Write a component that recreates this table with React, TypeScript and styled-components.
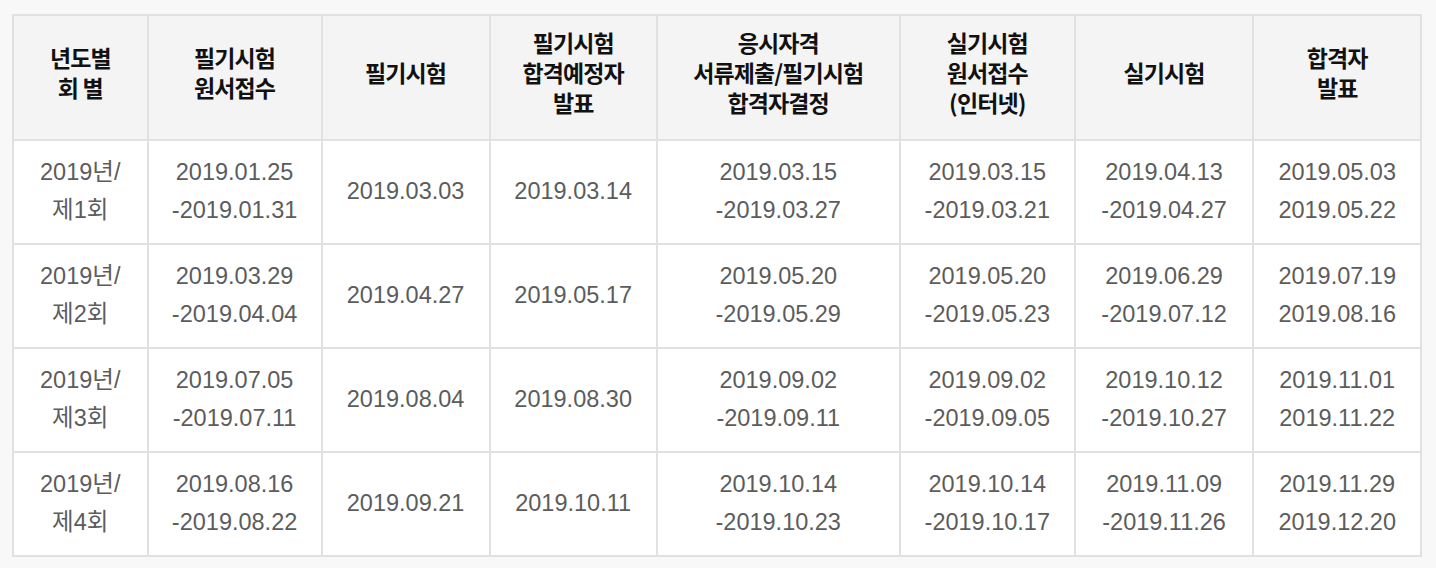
import React from "react";
import styled, { createGlobalStyle } from "styled-components";

const GlobalStyle = createGlobalStyle`
  html, body {
    margin: 0;
    padding: 0;
    background: #f8f8f8;
  }
  body {
    font-family: "Liberation Sans", "Noto Sans CJK KR", sans-serif;
  }
`;

const Page = styled.div`
  padding: 14px 12px 10px 12px;
  width: 1436px;
  box-sizing: border-box;
`;

const Table = styled.table`
  width: 1410px;
  table-layout: fixed;
  border-collapse: collapse;
  background: #ffffff;
  border: 2px solid #e1e1e1;
`;

const Col = styled.col<{ $w: number }>`
  width: ${(p) => p.$w}px;
`;

const HeadCell = styled.th`
  height: 111px;
  padding: 0 2px 12px 2px;
  background: #f4f4f4;
  border: 2px solid #e1e1e1;
  color: #111111;
  font-family: "Noto Sans CJK KR", "Liberation Sans", sans-serif;
  font-weight: 700;
  font-size: 23px;
  line-height: 30px;
  letter-spacing: -0.9px;
  text-align: center;
  vertical-align: middle;
`;

const BodyCell = styled.td`
  height: 99px;
  padding: 0 4px 3px 4px;
  border: 2px solid #e1e1e1;
  color: #5c5c5c;
  font-family: "Liberation Sans", "Noto Sans CJK KR", sans-serif;
  font-size: 23.5px;
  line-height: 38px;
  text-align: center;
  vertical-align: middle;
`;

const Line = styled.span`
  display: block;
`;

const widths = [134.5, 174, 168, 167, 243, 175, 178.5, 167.5];

const headers: string[][] = [
  ["년도별", "회 별"],
  ["필기시험", "원서접수"],
  ["필기시험"],
  ["필기시험", "합격예정자", "발표"],
  ["응시자격", "서류제출/필기시험", "합격자결정"],
  ["실기시험", "원서접수", "(인터넷)"],
  ["실기시험"],
  ["합격자", "발표"],
];

const rows: string[][][] = [
  [
    ["2019년/", "제1회"],
    ["2019.01.25", "-2019.01.31"],
    ["2019.03.03"],
    ["2019.03.14"],
    ["2019.03.15", "-2019.03.27"],
    ["2019.03.15", "-2019.03.21"],
    ["2019.04.13", "-2019.04.27"],
    ["2019.05.03", "2019.05.22"],
  ],
  [
    ["2019년/", "제2회"],
    ["2019.03.29", "-2019.04.04"],
    ["2019.04.27"],
    ["2019.05.17"],
    ["2019.05.20", "-2019.05.29"],
    ["2019.05.20", "-2019.05.23"],
    ["2019.06.29", "-2019.07.12"],
    ["2019.07.19", "2019.08.16"],
  ],
  [
    ["2019년/", "제3회"],
    ["2019.07.05", "-2019.07.11"],
    ["2019.08.04"],
    ["2019.08.30"],
    ["2019.09.02", "-2019.09.11"],
    ["2019.09.02", "-2019.09.05"],
    ["2019.10.12", "-2019.10.27"],
    ["2019.11.01", "2019.11.22"],
  ],
  [
    ["2019년/", "제4회"],
    ["2019.08.16", "-2019.08.22"],
    ["2019.09.21"],
    ["2019.10.11"],
    ["2019.10.14", "-2019.10.23"],
    ["2019.10.14", "-2019.10.17"],
    ["2019.11.09", "-2019.11.26"],
    ["2019.11.29", "2019.12.20"],
  ],
];

export default function App() {
  return (
    <>
      <GlobalStyle />
      <Page>
        <Table>
          <colgroup>
            {widths.map((w, i) => (
              <Col key={i} $w={w} />
            ))}
          </colgroup>
          <thead>
            <tr>
              {headers.map((h, i) => (
                <HeadCell key={i}>
                  {h.map((l, j) => (
                    <Line key={j}>{l}</Line>
                  ))}
                </HeadCell>
              ))}
            </tr>
          </thead>
          <tbody>
            {rows.map((r, i) => (
              <tr key={i}>
                {r.map((c, j) => (
                  <BodyCell key={j}>
                    {c.map((l, k) => (
                      <Line key={k}>{l}</Line>
                    ))}
                  </BodyCell>
                ))}
              </tr>
            ))}
          </tbody>
        </Table>
      </Page>
    </>
  );
}
